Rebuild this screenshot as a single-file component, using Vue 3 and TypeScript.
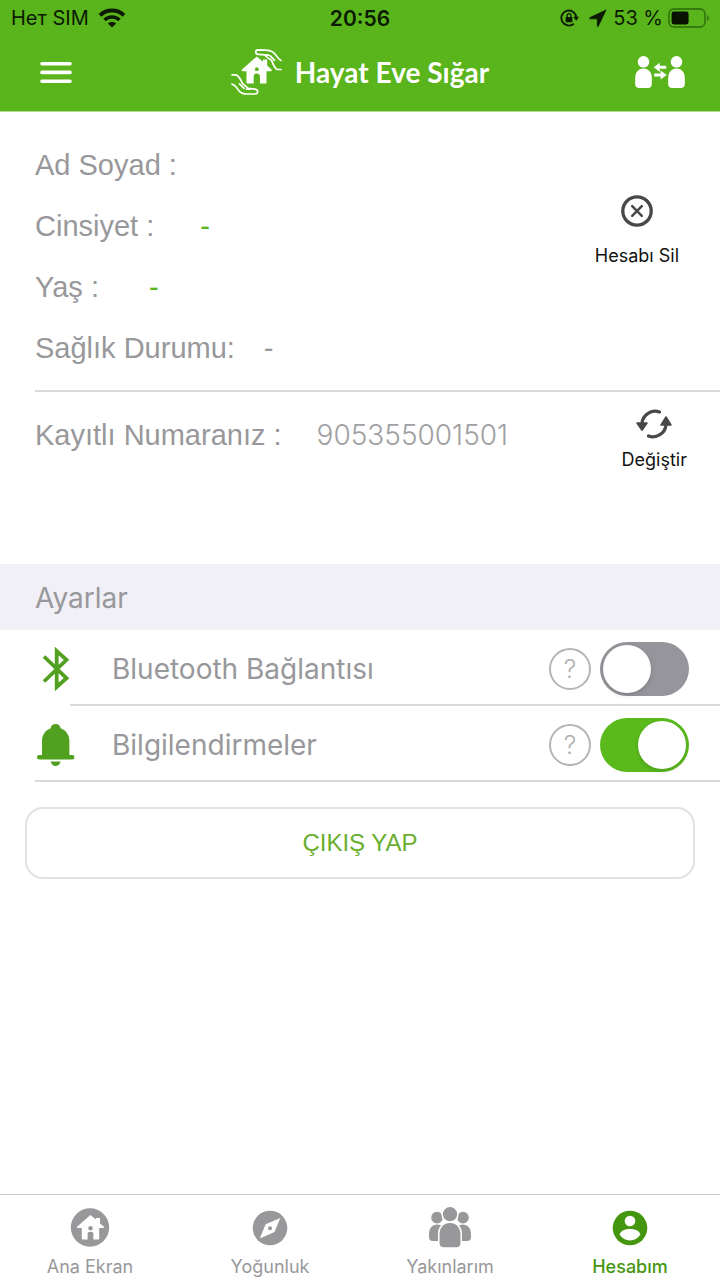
<script setup lang="ts">
import { ref } from 'vue'

interface Field {
  id: string
  label: string
  value: string
}

interface Tab {
  id: string
  label: string
}

const fields: Field[] = [
  { id: 'name', label: 'Ad Soyad :', value: '' },
  { id: 'gender', label: 'Cinsiyet :', value: '-' },
  { id: 'age', label: 'Yaş :', value: '-' },
  { id: 'health', label: 'Sağlık Durumu:', value: '-' },
]

const tabs: Tab[] = [
  { id: 'home', label: 'Ana Ekran' },
  { id: 'density', label: 'Yoğunluk' },
  { id: 'relatives', label: 'Yakınlarım' },
  { id: 'account', label: 'Hesabım' },
]

const activeTab = ref('account')
const bluetooth = ref(false)
const notifications = ref(true)
</script>

<template>
  <div class="app">
    <header class="header">
      <div class="status">
        <div class="status-side">
          <span class="carrier">Нет SIM</span>
          <svg class="wifi" width="28" height="20" viewBox="0 0 28 20" aria-hidden="true">
            <path d="M2 7.4a17.2 17.2 0 0 1 24 0" fill="none" stroke="#0b1a02" stroke-width="3.8" />
            <path d="M6.6 12a10.6 10.6 0 0 1 14.8 0" fill="none" stroke="#0b1a02" stroke-width="3.6" />
            <path d="M14 19.6l-4.2-4.2a6 6 0 0 1 8.4 0z" fill="#0b1a02" />
          </svg>
        </div>
        <time class="clock">20:56</time>
        <div class="status-side status-right">
          <svg width="19" height="18" viewBox="0 0 19 18" aria-hidden="true">
            <path d="M13.8 14.7A7.5 7.5 0 1 1 16.3 8" fill="none" stroke="#0b1a02" stroke-width="1.8" />
            <path d="M13.2 7.800h5.800l-2.700 4z" fill="#0b1a02" />
            <rect x="5.600" y="8" width="6.800" height="5.200" rx="0.800" fill="#0b1a02" />
            <path d="M7.100 8V6.600a1.900 1.900 0 0 1 3.800 0V8" fill="none" stroke="#0b1a02" stroke-width="1.300" />
          </svg>
          <svg class="arrow" width="18" height="18" viewBox="0 0 18 18" aria-hidden="true">
            <path d="M17 1L1 8.6c-.8.5-.5 1.200.2 1.200h7.100v7c0 .8.7 1 1.100.2z" fill="#0b1a02" stroke="#0b1a02" stroke-width="0.800" />
          </svg>
          <span class="carrier">53 %</span>
          <svg class="battery" width="41" height="20" viewBox="0 0 41 20" aria-hidden="true">
            <rect x="1" y="1" width="36" height="18" rx="5" fill="none" stroke="#357a0d" stroke-width="1.8" />
            <rect x="3.6" y="3.6" width="17" height="12.8" rx="2.4" fill="#071201" />
            <path d="M39 7v6q2-1 2-3t-2-3z" fill="#357a0d" />
          </svg>
        </div>
      </div>
      <div class="navbar">
        <button class="icon-button menu" type="button" aria-label="Menü">
          <svg width="32" height="24" viewBox="0 0 32 24" aria-hidden="true">
            <path d="M2 3.8h28M2 12.4h28M2 21.2h28" stroke="#fff" stroke-width="3.6" stroke-linecap="round" />
          </svg>
        </button>
        <div class="brand">
          <svg width="52" height="46" viewBox="0 0 52 46" aria-hidden="true">
            <path
              d="M25.8 7.4L11 20.6q-1 1.4.8 1.6h3.7v11.6q0 .8.8.8h6.4v-7.4q0-2.7 3.1-2.7t3.1 2.7v7.4h5.8q.8 0 .8-.8V22.2h4.2q1.8-.2.8-1.6l-4.3-4V10.4h-4.2v2.3z"
              fill="#fff"
            />
            <circle cx="25.8" cy="20.2" r="1.9" fill="#5ab41b" />
            <g fill="none" stroke="#fff" stroke-width="1.7" stroke-linecap="round" stroke-linejoin="round">
              <path d="M50 11.4C46.5 9.8 46 6.8 43.6 4.6 41.2 2 37.5 1.3 34 1.2L27.5.9C23.7.9 23.9 5.3 27.3 5.4L33.5 5.8C36 8.7 38 9.7 40.5 11.2C42 15 43.5 19.6 46.4 20.5H50" />
              <path d="M34.5 5.8L37.5 6.1M39 6.6Q41.5 9 43.5 11.4" />
              <path d="M1 25.800H4.600C8.500 26.400 9.600 31 11.600 34.600L17.200 39.400L24 40.200C27.500 40.700 27.600 44.900 24 45H16.500C12.500 45 9.500 44.200 7.500 41.200C5.500 38.500 4.500 35.900 1 35.200" />
              <path d="M8.500 34.800L13 39.300M15.500 40.200H19" />
            </g>
          </svg>
          <h1 class="title">Hayat Eve Sığar</h1>
        </div>
        <button class="icon-button people" type="button" aria-label="Kişi değiştir">
          <svg width="50" height="32" viewBox="0 0 50 32" fill="#fff" aria-hidden="true">
            <circle cx="8.5" cy="5.8" r="5.8" />
            <path d="M8.5 12.6c5 0 8.3 4 8.3 9v6.4q0 4-4 4H4.2q-4 0-4-4v-6.4c0-5 3.3-9 8.3-9z" />
            <circle cx="41.5" cy="5.8" r="5.8" />
            <path d="M41.5 12.6c5 0 8.3 4 8.3 9v6.4q0 4-4 4h-8.6q-4 0-4-4v-6.4c0-5 3.3-9 8.3-9z" />
            <path d="M19 11.3l5.5-4v2.8H31v2.5h-6.5v2.8zM31.4 19l-5.5-4v2.8h-6.5v2.5h6.5v2.8z" stroke="#fff" stroke-width="0.5" />
          </svg>
        </button>
      </div>
    </header>

    <main class="content">
      <section class="profile">
        <dl class="fields">
          <div v-for="field in fields" :key="field.id" class="field" :class="field.id">
            <dt>{{ field.label }}</dt>
            <dd>{{ field.value }}</dd>
          </div>
        </dl>
        <button class="action delete" type="button">
          <svg width="32" height="32" viewBox="0 0 32 32" fill="none" stroke="#484848" aria-hidden="true">
            <circle cx="16" cy="16" r="14.2" stroke-width="3.3" />
            <path d="M11.2 11.2l9.6 9.6M20.8 11.2l-9.6 9.6" stroke-width="2.5" stroke-linecap="round" />
          </svg>
          <span>Hesabı Sil</span>
        </button>
      </section>

      <section class="phone">
        <span class="phone-label">Kayıtlı Numaranız :</span>
        <span class="phone-number">905355001501</span>
        <button class="action change" type="button">
          <svg width="36" height="30" viewBox="0 0 36 30" aria-hidden="true">
            <g fill="none" stroke="#484848" stroke-width="3.2" stroke-linecap="round">
              <path d="M23.5 3A13.2 13.2 0 0 0 6 14" />
              <path d="M12.5 27A13.2 13.2 0 0 0 30 16" />
            </g>
            <g fill="#484848" stroke="#484848" stroke-width="1.5" stroke-linejoin="round">
              <path d="M1 14h10l-5 7.2z" />
              <path d="M25 16h10l-5-8z" />
            </g>
          </svg>
          <span>Değiştir</span>
        </button>
      </section>

      <h2 class="section-title">Ayarlar</h2>

      <div class="setting bluetooth">
        <svg class="setting-icon" width="40" height="44" viewBox="0 0 40 44" aria-hidden="true">
          <path
            d="M8 9.500L30.500 31.200L20.700 40V4L30.500 12.800L8 34.500"
            fill="none"
            stroke="#52a01f"
            stroke-width="3.800"
          />
        </svg>
        <label for="bluetooth">Bluetooth Bağlantısı</label>
        <button class="help" type="button" aria-label="Bluetooth yardım">?</button>
        <input id="bluetooth" v-model="bluetooth" class="switch" type="checkbox" role="switch" />
      </div>
      <div class="setting notifications">
        <svg class="setting-icon" width="40" height="44" viewBox="0 0 40 44" fill="#52a01f" aria-hidden="true">
          <path d="M19.600 1c-2.800 0-4.500 1.600-4.900 4.200C9.100 7.200 6 12 6 18v14H3.200a2.200 2.200 0 0 0 0 4.500h33a2.200 2.200 0 0 0 0-4.500H33.400V18c0-6-3.200-10.800-8.800-12.800C24.100 2.600 22.400 1 19.600 1z" />
          <path d="M14.600 38.600h10q-1.400 4.400-5 4.400t-5-4.400z" />
        </svg>
        <label for="notifications">Bilgilendirmeler</label>
        <button class="help" type="button" aria-label="Bilgilendirme yardım">?</button>
        <input id="notifications" v-model="notifications" class="switch" type="checkbox" role="switch" />
      </div>

      <button class="logout" type="button">ÇIKIŞ YAP</button>
    </main>

    <nav class="tabs">
      <button
        v-for="tab in tabs"
        :key="tab.id"
        type="button"
        class="tab"
        :class="{ active: tab.id === activeTab }"
        @click="activeTab = tab.id"
      >
        <svg width="44" height="44" viewBox="0 0 44 44" fill="currentColor" aria-hidden="true">
          <template v-if="tab.id === 'home'">
            <circle cx="22" cy="21.5" r="19.2" />
            <path d="M22.5 9L9 20.8q-.6 1.200.8 1.300h4v10.600q0 .8.8.8h5V28q0-2.300 2.900-2.300t2.900 2.300v5.500h5q.8 0 .8-.8V22.100h4q1.400-.1.800-1.300L32 17.500v-5.600h-4.200v1.600z" fill="#fff" />
            <circle cx="22.500" cy="22.200" r="2.200" />
          </template>
          <template v-else-if="tab.id === 'density'">
            <circle cx="22" cy="22" r="17.3" />
            <path d="M32.3 12L26.5 26L11.8 32.5L17.6 18.3z" fill="#fff" />
            <circle cx="22" cy="22.2" r="2" />
          </template>
          <template v-else-if="tab.id === 'relatives'">
            <circle cx="9" cy="11.6" r="5.8" />
            <circle cx="35" cy="11.6" r="5.8" />
            <path d="M9.2 18.5c5 0 8.2 4 8.2 9V35H5q-4 0-4-4v-3.500c0-5 3.200-9 8.200-9zM34.8 18.500c-5 0-8.200 4-8.200 9V35H39q4 0 4-4v-3.500c0-5-3.200-9-8.200-9z" />
            <g stroke="#fff" stroke-width="1.5">
              <circle cx="22" cy="8.2" r="7.9" />
              <path d="M22 16.3c6.6 0 11.2 5 11.2 11.2V37q0 5-5 5H15.8q-5 0-5-5v-9.500c0-6.200 4.600-11.200 11.200-11.200z" />
            </g>
          </template>
          <template v-else>
            <circle cx="22" cy="22" r="17.3" />
            <circle cx="22" cy="15" r="5.3" fill="#fff" />
            <path d="M11.6 28.600C12.700 24.600 17 23 22 23s9.300 1.600 10.400 5.600C30 32.500 26.200 34.500 22 34.500s-8-2-10.400-5.900z" fill="#fff" />
          </template>
        </svg>
        <span>{{ tab.label }}</span>
      </button>
    </nav>
  </div>
</template>

<style>
body {
  background: #fff;
}
</style>

<style scoped>
.app {
  display: flex;
  flex-direction: column;
  min-height: 100vh;
  background: #fff;
  color: #98989b;
  font-family: Inter, 'Liberation Sans', sans-serif;
}

button {
  margin: 0;
  padding: 0;
  border: 0;
  background: none;
  color: inherit;
  font: inherit;
}

svg {
  display: block;
  flex: none;
}

.header {
  background: #5ab41b;
  border-bottom: 1px solid #b4dd98;
}

.status {
  display: grid;
  grid-template-columns: 1fr auto 1fr;
  align-items: center;
  height: 36px;
  padding: 0 11px;
  color: #0b1a02;
}

.status-side {
  display: flex;
  align-items: center;
}

.status-right {
  justify-content: flex-end;
}

.carrier {
  font-size: 20px;
}

.wifi {
  margin-left: 9px;
}

.arrow {
  margin: 0 6px 0 10px;
}

.battery {
  margin-left: 5px;
}

.clock {
  font-size: 21px;
  font-weight: 600;
}

.navbar {
  display: grid;
  grid-template-columns: 1fr auto 1fr;
  align-items: center;
  height: 75px;
  padding: 0 35px 3px;
  box-sizing: border-box;
}

.menu {
  justify-self: start;
  margin-left: 5px;
}

.people {
  justify-self: end;
}

.brand {
  display: flex;
  align-items: center;
  gap: 12px;
}

.title {
  margin: 0;
  color: #fff;
  font-family: Lato, sans-serif;
  font-size: 28px;
  font-weight: 700;
  line-height: 32px;
}

.content {
  flex: 1;
}

.profile {
  display: flex;
  justify-content: space-between;
  align-items: flex-start;
  margin-left: 35px;
  padding: 23px 41px 11px 0;
  border-bottom: 2px solid #dadadb;
}

.fields {
  margin: 0;
  font-family: 'Liberation Sans', sans-serif;
  font-size: 29px;
}

.field {
  display: flex;
  align-items: center;
  height: 61px;
}

.field dd {
  margin: 0;
}

.gender {
  gap: 46px;
}

.age {
  gap: 50px;
}

.health {
  gap: 29px;
}

.gender dd,
.age dd {
  color: #5ab41b;
}

.action {
  display: flex;
  flex-direction: column;
  align-items: center;
  color: #111;
  font-size: 18px;
  line-height: 24px;
}

.delete {
  gap: 17px;
  margin-top: 60px;
}

.change {
  gap: 9px;
  margin-left: auto;
}

.phone {
  display: flex;
  align-items: flex-start;
  min-height: 155px;
  padding: 17px 33px 0 35px;
}

.phone-label,
.phone-number {
  line-height: 52px;
}

.phone-label {
  font-family: 'Liberation Sans', sans-serif;
  font-size: 29px;
}

.phone-number {
  margin-left: 35px;
  color: #a0a0a2;
  font-size: 28px;
  font-weight: 300;
}

.section-title {
  margin: 0;
  padding: 2px 35px 0;
  background: #f0f0f6;
  font-size: 28px;
  font-weight: 400;
  line-height: 64px;
}

.setting {
  display: flex;
  align-items: center;
  height: 76px;
  padding: 2px 31px 0 0;
  box-sizing: border-box;
  background: linear-gradient(#dadadb, #dadadb) no-repeat right bottom;
}

.bluetooth {
  background-size: calc(100% - 70px) 2px;
}

.notifications {
  background-size: calc(100% - 35px) 2px;
}

.setting-icon {
  margin: 0 36px;
}

.setting label {
  flex: 1;
  font-size: 28px;
}

.help {
  width: 42px;
  height: 42px;
  margin-right: 9px;
  border: 2px solid #b5b5b6;
  border-radius: 50%;
  color: #b0b0b2;
  font-size: 25px;
  font-weight: 300;
  line-height: 38px;
}

.switch {
  appearance: none;
  flex: none;
  display: flex;
  width: 89px;
  height: 54px;
  margin: 0;
  padding: 3px;
  box-sizing: border-box;
  border-radius: 27px;
  background: #95959b;
}

.switch::before {
  content: '';
  width: 48px;
  height: 48px;
  border-radius: 50%;
  background: #fff;
  box-shadow: 0 2px 5px rgba(0, 0, 0, 0.15);
}

.switch:checked {
  justify-content: flex-end;
  background: #5aba1c;
}

.logout {
  display: block;
  width: calc(100% - 50px);
  height: 72px;
  margin: 25px 25px 26px;
  border: 2px solid #e2e2e3;
  border-radius: 18px;
  color: #6aae2e;
  font-family: 'Liberation Sans', sans-serif;
  font-size: 24px;
}

.tabs {
  display: grid;
  grid-template-columns: repeat(4, 1fr);
  height: 85px;
  border-top: 1px solid #c8c8c9;
}

.tab {
  display: flex;
  flex-direction: column;
  align-items: center;
  gap: 6px;
  padding-top: 11px;
  font-size: 18px;
  line-height: 22px;
}

.tab.active {
  color: #45960f;
  font-weight: 500;
}
</style>
